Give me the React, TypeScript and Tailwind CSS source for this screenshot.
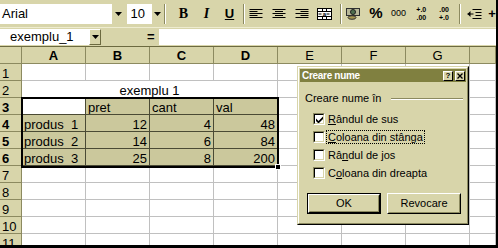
import React from 'react'

type Cell = string | number

const data: Record<number, Cell[]> = {
  3: ['', 'pret', 'cant', 'val'],
  4: ['produs  1', 12, 4, 48],
  5: ['produs  2', 14, 6, 84],
  6: ['produs  3', 25, 8, 200],
}

const rows = [1, 2, 3, 4, 5, 6, 7, 8, 9, 10, 11]
const letters = ['A', 'B', 'C', 'D', 'E', 'F', 'G', '']

function DropArrow() {
  return (
    <svg width="7" height="4" viewBox="0 0 7 4">
      <path d="M0 0h7L3.5 4z" fill="#000" />
    </svg>
  )
}

function Sep() {
  return <div className="h-[20px] w-[2px] border-l border-r border-l-[#8c8a60] border-r-white" />
}

function Slot({ children }: { children?: React.ReactNode }) {
  return <div className="flex h-[22px] w-[23px] items-center justify-center">{children}</div>
}

function AlignIcon({ align }: { align: 'left' | 'center' | 'right' }) {
  const lines = [13, 8, 13, 8, 13]
  return (
    <svg width="14" height="10" viewBox="0 0 14 10">
      {lines.map((w, i) => {
        const x = align === 'left' ? 0.5 : align === 'center' ? (14 - w) / 2 : 13.5 - w
        return <line key={i} x1={x} x2={x + w} y1={i * 2 + 0.5} y2={i * 2 + 0.5} stroke="#000" />
      })}
    </svg>
  )
}

function MergeIcon() {
  return (
    <svg width="15" height="12" viewBox="0 0 15 12">
      <rect x="0.5" y="0.5" width="14" height="11" fill="#fff" stroke="#000" />
      <line x1="0.5" y1="3.5" x2="14.5" y2="3.5" stroke="#000" />
      <line x1="0.5" y1="8.5" x2="14.5" y2="8.5" stroke="#000" />
      <line x1="5.5" y1="0.5" x2="5.5" y2="3.5" stroke="#000" />
      <line x1="9.5" y1="0.5" x2="9.5" y2="3.5" stroke="#000" />
      <line x1="5.5" y1="8.5" x2="5.5" y2="11.5" stroke="#000" />
      <line x1="9.5" y1="8.5" x2="9.5" y2="11.5" stroke="#000" />
      <path d="M1.5 6h3M12.5 6h-3" stroke="#000" />
      <text x="7.5" y="8" fontSize="6" textAnchor="middle" fontFamily="Liberation Sans" fontWeight="bold">a</text>
    </svg>
  )
}

function CurrencyIcon() {
  return (
    <svg width="14" height="13" viewBox="0 0 14 13">
      <rect x="0.5" y="1.5" width="13" height="7" fill="#b8b898" stroke="#303030" />
      <circle cx="7" cy="5" r="2.5" fill="#4f6f4f" stroke="#202020" />
      <ellipse cx="6" cy="10.5" rx="4" ry="1.8" fill="#a89850" stroke="#303030" />
    </svg>
  )
}

function IndentIcon() {
  return (
    <svg width="15" height="12" viewBox="0 0 15 12">
      <path d="M5.5 1.5h9M8.5 4.5h6M8.5 7.5h6M5.5 10.5h9" stroke="#000" />
      <path d="M0.5 6h6" stroke="#000" />
      <path d="M0.5 6l3-3v6z" fill="#000" />
    </svg>
  )
}

function DecimalIcon({ top, bottom }: { top: string; bottom: string }) {
  return (
    <div className="flex flex-col items-end gap-[1px] text-[7px] font-bold">
      <span className="block h-[7px] leading-[7px]">{top}</span>
      <span className="block h-[7px] leading-[7px]">{bottom}</span>
    </div>
  )
}

function Toolbar() {
  return (
    <div className="flex h-[28px] items-center border-b border-b-[#eeecd0] bg-[#d8d5aa] text-[13px] text-black">
      <div className="flex h-[20px] w-[113px] items-center bg-white pl-[2px]">Arial</div>
      <div className="flex h-[20px] w-[14px] items-center justify-center">
        <DropArrow />
      </div>
      <div className="ml-[2px] flex h-[20px] w-[25px] items-center bg-white pl-[3px]">10</div>
      <div className="flex h-[20px] w-[10px] items-center justify-center">
        <DropArrow />
      </div>
      <div className="ml-[2px]">
        <Sep />
      </div>
      <div className="ml-[6px] flex">
        <Slot>
          <span className="font-['Liberation_Serif',serif] text-[14px] font-bold">B</span>
        </Slot>
        <Slot>
          <span className="font-['Liberation_Serif',serif] text-[14px] font-bold italic">I</span>
        </Slot>
        <Slot>
          <span className="text-[13px] font-bold underline">U</span>
        </Slot>
      </div>
      <div className="ml-[2px]">
        <Sep />
      </div>
      <Slot>
        <AlignIcon align="left" />
      </Slot>
      <Slot>
        <AlignIcon align="center" />
      </Slot>
      <Slot>
        <AlignIcon align="right" />
      </Slot>
      <Slot>
        <MergeIcon />
      </Slot>
      <div className="ml-[4px]">
        <Sep />
      </div>
      <Slot>
        <CurrencyIcon />
      </Slot>
      <Slot>
        <span className="text-[15px] font-bold">%</span>
      </Slot>
      <Slot>
        <span className="text-[9px]">000</span>
      </Slot>
      <Slot>
        <DecimalIcon top="+.0" bottom=".00" />
      </Slot>
      <Slot>
        <DecimalIcon top=".00" bottom="+.0" />
      </Slot>
      <div className="ml-[4px]">
        <Sep />
      </div>
      <div className="ml-[2px]">
        <Slot>
          <IndentIcon />
        </Slot>
      </div>
      <span className="ml-[2px] text-[13px] font-bold">+</span>
    </div>
  )
}

function FormulaBar() {
  return (
    <div className="flex h-[18px] items-center bg-[#d8d5aa] text-[13px] text-black">
      <div className="flex h-[16px] w-[89px] items-center bg-white pl-[10px]">exemplu_1</div>
      <div className="flex h-[16px] w-[12px] items-center justify-center border border-t-white border-l-white border-r-[#6c6a40] border-b-[#6c6a40]">
        <DropArrow />
      </div>
      <span className="ml-[46px] font-bold">=</span>
      <div className="ml-[4px] h-[16px] flex-1 bg-white" />
    </div>
  )
}

function Sheet() {
  return (
    <div className="relative border-t border-t-[#6c6a40] text-[13px] text-black">
      <div className="grid grid-cols-[22px_repeat(7,64px)_1fr]">
        <div className="h-[17px] border-r border-b border-[#8c8a60] bg-[#d8d5aa]" />
        {letters.map((l, i) => (
          <div
            key={i}
            className={`h-[17px] border-r border-b border-[#8c8a60] bg-[#d8d5aa] pt-[1px] text-center leading-[15px] ${
              i < 4 ? 'font-bold' : ''
            }`}
          >
            {l}
          </div>
        ))}

        {rows.map((r) => {
          const sel = r >= 3 && r <= 6
          const vals = data[r] ?? ['', '', '', '']
          return (
            <React.Fragment key={r}>
              <div
                className={`h-[17px] border-r border-b border-[#8c8a60] bg-[#d8d5aa] pl-[2px] pt-[2px] leading-[15px] ${
                  sel ? 'font-bold' : ''
                }`}
              >
                {r}
              </div>
              {r === 2 ? (
                <div className="col-span-4 h-[17px] border-r border-b border-[#c0c0c0] bg-white pt-[2px] text-center leading-[15px]">
                  exemplu 1
                </div>
              ) : (
                vals.map((v, c) => {
                  const active = r === 3 && c === 0
                  const bg = sel && !active ? 'bg-[#cbc89c] border-[#4a4a34]' : sel ? 'bg-white border-[#4a4a34]' : 'bg-white border-[#c0c0c0]'
                  return (
                    <div
                      key={c}
                      className={`h-[17px] overflow-hidden whitespace-pre border-r border-b px-[2px] pt-[2px] leading-[15px] ${bg} ${
                        typeof v === 'number' ? 'text-right' : 'text-left'
                      }`}
                    >
                      {v}
                    </div>
                  )
                })
              )}
              {[0, 1, 2, 3].map((c) => (
                <div key={c} className="h-[17px] border-r border-b border-[#c0c0c0] bg-white" />
              ))}
            </React.Fragment>
          )
        })}
      </div>

      {/* selection frame */}
      <div className="absolute left-[21px] top-[50px] h-[71px] w-[258px] border-2 border-black">
        <div className="absolute -right-[4px] -bottom-[4px] h-[6px] w-[6px] border border-white bg-black" />
      </div>
    </div>
  )
}

function CheckBox({ checked }: { checked?: boolean }) {
  return (
    <div className="h-[12px] w-[12px] border border-t-[#8c8a60] border-l-[#8c8a60] border-r-white border-b-white">
      <div className="flex h-full w-full items-center justify-center border border-t-black border-l-black border-r-[#d8d5aa] border-b-[#d8d5aa] bg-white">
        {checked && (
          <svg width="7" height="7" viewBox="0 0 7 7">
            <path d="M0 2.5L2.5 5L7 0.5V3L2.5 7.5L0 5z" fill="#000" />
          </svg>
        )}
      </div>
    </div>
  )
}

function Option({ checked, focus, children }: { checked?: boolean; focus?: boolean; children: React.ReactNode }) {
  return (
    <div className="flex h-[18px] items-center">
      <CheckBox checked={checked} />
      <span className={`ml-[1px] px-[1px] leading-[12px] border ${focus ? 'border-dotted border-black' : 'border-transparent'}`}>
        {children}
      </span>
    </div>
  )
}

function Button({ def, children }: { def?: boolean; children: React.ReactNode }) {
  return (
    <div className={`h-[21px] w-[74px] ${def ? 'border border-black' : ''}`}>
      <div className="h-full border border-t-white border-l-white border-r-black border-b-black">
        <div className="flex h-full items-center justify-center border border-t-[#d8d5aa] border-l-[#d8d5aa] border-r-[#8c8a60] border-b-[#8c8a60]">
          {children}
        </div>
      </div>
    </div>
  )
}

function CaptionBtn({ children }: { children: React.ReactNode }) {
  return (
    <div className="flex h-[10px] w-[10px] items-center justify-center border border-t-white border-l-white border-r-black border-b-black bg-[#d8d5aa] text-[8px] font-bold leading-[8px] text-black">
      {children}
    </div>
  )
}

function Dialog() {
  return (
    <div className="absolute left-[297px] top-[66px] h-[159px] w-[172px] border border-t-[#d8d5aa] border-l-[#d8d5aa] border-r-black border-b-black">
      <div className="h-full border border-t-white border-l-white border-r-[#8c8a60] border-b-[#8c8a60] bg-[#d8d5aa] p-[1px] text-[11px] text-black">
        <div className="flex h-[13px] items-center justify-between bg-[#808040] pl-[2px] pr-[1px]">
          <span className="text-[10px] font-bold tracking-[-0.3px] text-white">Creare nume</span>
          <div className="flex gap-[2px]">
            <CaptionBtn>?</CaptionBtn>
            <CaptionBtn>
              <svg width="6" height="6" viewBox="0 0 6 6">
                <path d="M0.5 0.5l5 5M5.5 0.5l-5 5" stroke="#000" strokeWidth="1.3" />
              </svg>
            </CaptionBtn>
          </div>
        </div>

        <div className="mt-[10px] flex items-center pl-[5px] pr-[3px]">
          <span className="leading-[13px]">Creare nume în</span>
          <div className="ml-[10px] h-[2px] flex-1 border-t border-b border-t-[#8c8a60] border-b-white" />
        </div>

        <div className="mt-[5px] pl-[13px]">
          <Option checked>
            <u>R</u>ândul de sus
          </Option>
          <Option focus>
            <u>C</u>oloana din stânga
          </Option>
          <Option>
            Râ<u>n</u>dul de jos
          </Option>
          <Option>
            C<u>o</u>loana din dreapta
          </Option>
        </div>

        <div className="mt-[11px] flex gap-[6px] pl-[7px]">
          <Button def>OK</Button>
          <Button>Revocare</Button>
        </div>
      </div>
    </div>
  )
}

export default function App() {
  return (
    <div className="relative h-[248px] w-[498px] overflow-hidden border-r-2 border-b-[3px] border-black bg-white font-['Liberation_Sans',Arial,sans-serif]">
      <Toolbar />
      <FormulaBar />
      <Sheet />
      <Dialog />
    </div>
  )
}
